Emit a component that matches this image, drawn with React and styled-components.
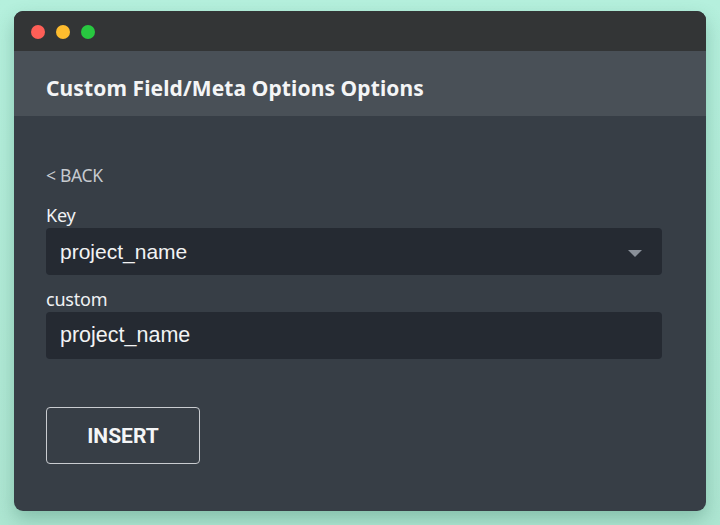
import React from "react";
import styled, { createGlobalStyle } from "styled-components";

const Global = createGlobalStyle`
  html, body { margin: 0; padding: 0; }
  body {
    width: 720px; height: 525px; overflow: hidden;
    background: linear-gradient(180deg, #b5f0dd 0%, #aee6d2 100%);
    font-family: "Noto Sans", "Open Sans", sans-serif;
  }
`;

const Stage = styled.div`
  padding: 11px 14px 0 14px;
`;

const Window = styled.div`
  width: 692px;
  height: 500px;
  border-radius: 9px;
  overflow: hidden;
  background: #373e46;
  box-shadow: 0 8px 18px rgba(40, 100, 80, 0.3);
  display: flex;
  flex-direction: column;
`;

const TitleBar = styled.div`
  height: 40px;
  background: #333536;
  display: flex;
  align-items: center;
  gap: 11px;
  padding-left: 17px;
  padding-top: 2px;
  box-sizing: border-box;
`;

const Dot = styled.span`
  width: 14px;
  height: 14px;
  border-radius: 50%;
  background: ${(p) => p.$c};
`;

const Header = styled.div`
  height: 65px;
  box-sizing: border-box;
  padding-top: 8px;
  background: #495057;
  display: flex;
  align-items: center;
  padding-left: 32px;
  color: #f4f5f6;
  font-family: "Noto Sans", sans-serif;
  font-weight: 700;
  font-size: 21px;
  letter-spacing: 0.1px;
`;

const Body = styled.div`
  padding: 48px 44px 0 32px;
  display: flex;
  flex-direction: column;
`;

const Back = styled.div`
  color: #c6cacf;
  font-family: "Noto Sans", sans-serif;
  font-size: 17.5px;
  line-height: 22px;
  letter-spacing: -0.3px;
  margin-bottom: 17px;
`;

const Label = styled.div`
  color: #f0f2f4;
  font-family: "Noto Sans", sans-serif;
  font-size: 18px;
  line-height: 24px;
  letter-spacing: -0.2px;
  margin-bottom: 1px;
`;

const Field = styled.div`
  height: 47px;
  border-radius: 4px;
  background: #252a32;
  display: flex;
  align-items: center;
  justify-content: space-between;
  padding: 0 14px;
  color: #f2f3f4;
  font-family: "Liberation Sans", Arial, sans-serif;
  font-size: ${(p) => p.$fs || 20}px;
  margin-bottom: ${(p) => p.$mb || 0}px;
  box-sizing: border-box;
`;

const Caret = styled.span`
  width: 0;
  height: 0;
  border-left: 7px solid transparent;
  border-right: 7px solid transparent;
  border-top: 7px solid #8a9099;
  margin-right: 6px;
  margin-top: 3px;
`;

const Button = styled.button`
  margin-top: 48px;
  width: 154px;
  height: 57px;
  border: 1.5px solid #c9ccd0;
  border-radius: 4px;
  background: transparent;
  color: #f4f5f6;
  font-family: Roboto, "Liberation Sans", sans-serif;
  font-weight: 700;
  font-size: 21px;
  align-self: flex-start;
  cursor: pointer;
`;

export default function App() {
  return (
    <>
      <Global />
      <Stage>
        <Window>
          <TitleBar>
            <Dot $c="#fe5f57" />
            <Dot $c="#febc2e" />
            <Dot $c="#28c840" />
          </TitleBar>
          <Header>Custom Field/Meta Options Options</Header>
          <Body>
            <Back>&lt; BACK</Back>
            <Label>Key</Label>
            <Field $mb={12} $fs={21}>
              <span>project_name</span>
              <Caret />
            </Field>
            <Label>custom</Label>
            <Field $fs={21.5}>
              <span>project_name</span>
            </Field>
            <Button>INSERT</Button>
          </Body>
        </Window>
      </Stage>
    </>
  );
}
